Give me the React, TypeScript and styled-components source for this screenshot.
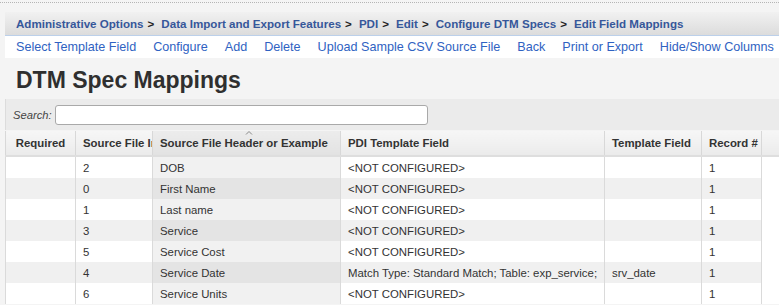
import React from 'react';
import styled, { createGlobalStyle } from 'styled-components';

const GlobalStyle = createGlobalStyle`
  html, body {
    margin: 0;
    padding: 0;
    background: #f4f4f4;
    font-family: "Liberation Sans", Arial, sans-serif;
    color: #333;
    overflow: hidden;
  }
`;

const Page = styled.div`
  width: 779px;
  height: 305px;
  overflow: hidden;
  padding-top: 2px;
  box-sizing: border-box;
`;

const TopRule = styled.div`
  border-top: 1px dotted #b5b5b5;
  margin-bottom: 9px;
`;

const Content = styled.div`
  margin-left: 5px;
  margin-right: 0;
`;

const Breadcrumbs = styled.nav`
  height: 23px;
  display: flex;
  align-items: center;
  gap: 4px;
  padding-left: 11px;
  background: linear-gradient(#f1f1f1, #dcdcdc);
  border-bottom: 1px solid #bcd0ea;
  font-size: 11.6px;
  font-weight: bold;
  white-space: nowrap;
`;

const Crumb = styled.a`
  color: #36579a;
  text-decoration: none;
`;

const Sep = styled.span`
  color: #222;
  margin-right: 3px;
`;

const Toolbar = styled.div`
  height: 22px;
  display: flex;
  align-items: center;
  gap: 17px;
  padding-left: 11px;
  background: #fff;
  font-size: 12.6px;
  white-space: nowrap;
`;

const ToolLink = styled.a`
  color: #2f62c2;
  text-decoration: none;
`;

const Title = styled.h1`
  margin: 8px 0 0 11px;
  height: 28px;
  line-height: 28px;
  font-size: 23px;
  font-weight: bold;
  color: #2f2f2f;
`;

const SearchBar = styled.div`
  margin-top: 5px;
  height: 31px;
  display: flex;
  align-items: center;
  gap: 3px;
  padding-left: 7px;
  background: #ebebeb;
  border-left: 1px solid #dcdcdc;
`;

const SearchLabel = styled.label`
  font-style: italic;
  font-size: 11.2px;
  color: #444;
`;

const SearchInput = styled.input`
  width: 373px;
  height: 20px;
  box-sizing: border-box;
  border: 1px solid #a9a9a9;
  border-radius: 3px;
  background: #fff;
  padding: 0 4px;
`;

const Table = styled.table`
  margin-top: 1px;
  width: 774px;
  table-layout: fixed;
  border-collapse: collapse;
  font-size: 11.4px;
`;

const Th = styled.th<{ $sorted?: boolean; $center?: boolean }>`
  position: relative;
  height: 24px;
  padding: 0 0 0 ${(p) => (p.$center ? '0' : '7px')};
  text-align: ${(p) => (p.$center ? 'center' : 'left')};
  font-weight: bold;
  white-space: nowrap;
  overflow: hidden;
  color: #333;
  background: ${(p) => (p.$sorted ? 'linear-gradient(#ececec, #e2e2e2)' : 'linear-gradient(#f6f6f6, #ebebeb)')};
  border-left: 1px solid #d8d8d8;
  border-bottom: 2px solid #dedede;
`;

const Row = styled.tr<{ $odd: boolean }>`
  background: ${(p) => (p.$odd ? '#f0f0f0' : '#ffffff')};
`;

const Td = styled.td<{ $sorted?: boolean; $odd?: boolean; $blank?: boolean }>`
  height: 21px;
  padding: 0 0 0 7px;
  white-space: nowrap;
  overflow: hidden;
  color: #333;
  border-left: 1px solid #dadada;
  background: ${(p) =>
    p.$blank ? '#fff' : p.$sorted ? (p.$odd ? '#e4e4e4' : '#f1f1f1') : 'transparent'};
`;

const SortCaret = styled.svg`
  position: absolute;
  top: 0;
  left: 92px;
`;

const crumbs = [
  'Administrative Options',
  'Data Import and Export Features',
  'PDI',
  'Edit',
  'Configure DTM Specs',
  'Edit Field Mappings',
];

const actions = [
  'Select Template Field',
  'Configure',
  'Add',
  'Delete',
  'Upload Sample CSV Source File',
  'Back',
  'Print or Export',
  'Hide/Show Columns',
];

const NC = '<NOT CONFIGURED>';

const rows = [
  { idx: '2', header: 'DOB', pdi: NC, field: '', rec: '1' },
  { idx: '0', header: 'First Name', pdi: NC, field: '', rec: '1' },
  { idx: '1', header: 'Last name', pdi: NC, field: '', rec: '1' },
  { idx: '3', header: 'Service', pdi: NC, field: '', rec: '1' },
  { idx: '5', header: 'Service Cost', pdi: NC, field: '', rec: '1' },
  { idx: '4', header: 'Service Date', pdi: 'Match Type: Standard Match; Table: exp_service;', field: 'srv_date', rec: '1' },
  { idx: '6', header: 'Service Units', pdi: NC, field: '', rec: '1' },
];

const widths = [70, 77, 188, 264, 97, 60, 18];

export default function App() {
  return (
    <Page>
      <GlobalStyle />
      <TopRule />
      <Content>
        <Breadcrumbs>
          {crumbs.map((c, i) => (
            <React.Fragment key={c}>
              <Crumb href="#">{c}</Crumb>
              {i < crumbs.length - 1 && <Sep>&gt;</Sep>}
            </React.Fragment>
          ))}
        </Breadcrumbs>
        <Toolbar>
          {actions.map((a) => (
            <ToolLink key={a} href="#">{a}</ToolLink>
          ))}
        </Toolbar>
        <Title>DTM Spec Mappings</Title>
        <SearchBar>
          <SearchLabel>Search:</SearchLabel>
          <SearchInput type="text" />
        </SearchBar>
        <Table>
          <colgroup>
            {widths.map((w, i) => (
              <col key={i} style={{ width: w }} />
            ))}
          </colgroup>
          <thead>
            <tr>
              <Th $center>Required</Th>
              <Th>Source File Index</Th>
              <Th $sorted>
                <SortCaret width="8" height="4" viewBox="0 0 8 4">
                  <path d="M1 3.5 L4 0.5 L7 3.5" fill="none" stroke="#888" strokeWidth="1" />
                </SortCaret>
                Source File Header or Example
              </Th>
              <Th>PDI Template Field</Th>
              <Th>Template Field</Th>
              <Th>Record #</Th>
              <Th />
            </tr>
          </thead>
          <tbody>
            {rows.map((r, i) => {
              const odd = i % 2 === 1;
              return (
                <Row key={r.header} $odd={odd}>
                  <Td />
                  <Td>{r.idx}</Td>
                  <Td $sorted $odd={odd}>{r.header}</Td>
                  <Td>{r.pdi}</Td>
                  <Td>{r.field}</Td>
                  <Td>{r.rec}</Td>
                  <Td $blank />
                </Row>
              );
            })}
          </tbody>
        </Table>
      </Content>
    </Page>
  );
}
